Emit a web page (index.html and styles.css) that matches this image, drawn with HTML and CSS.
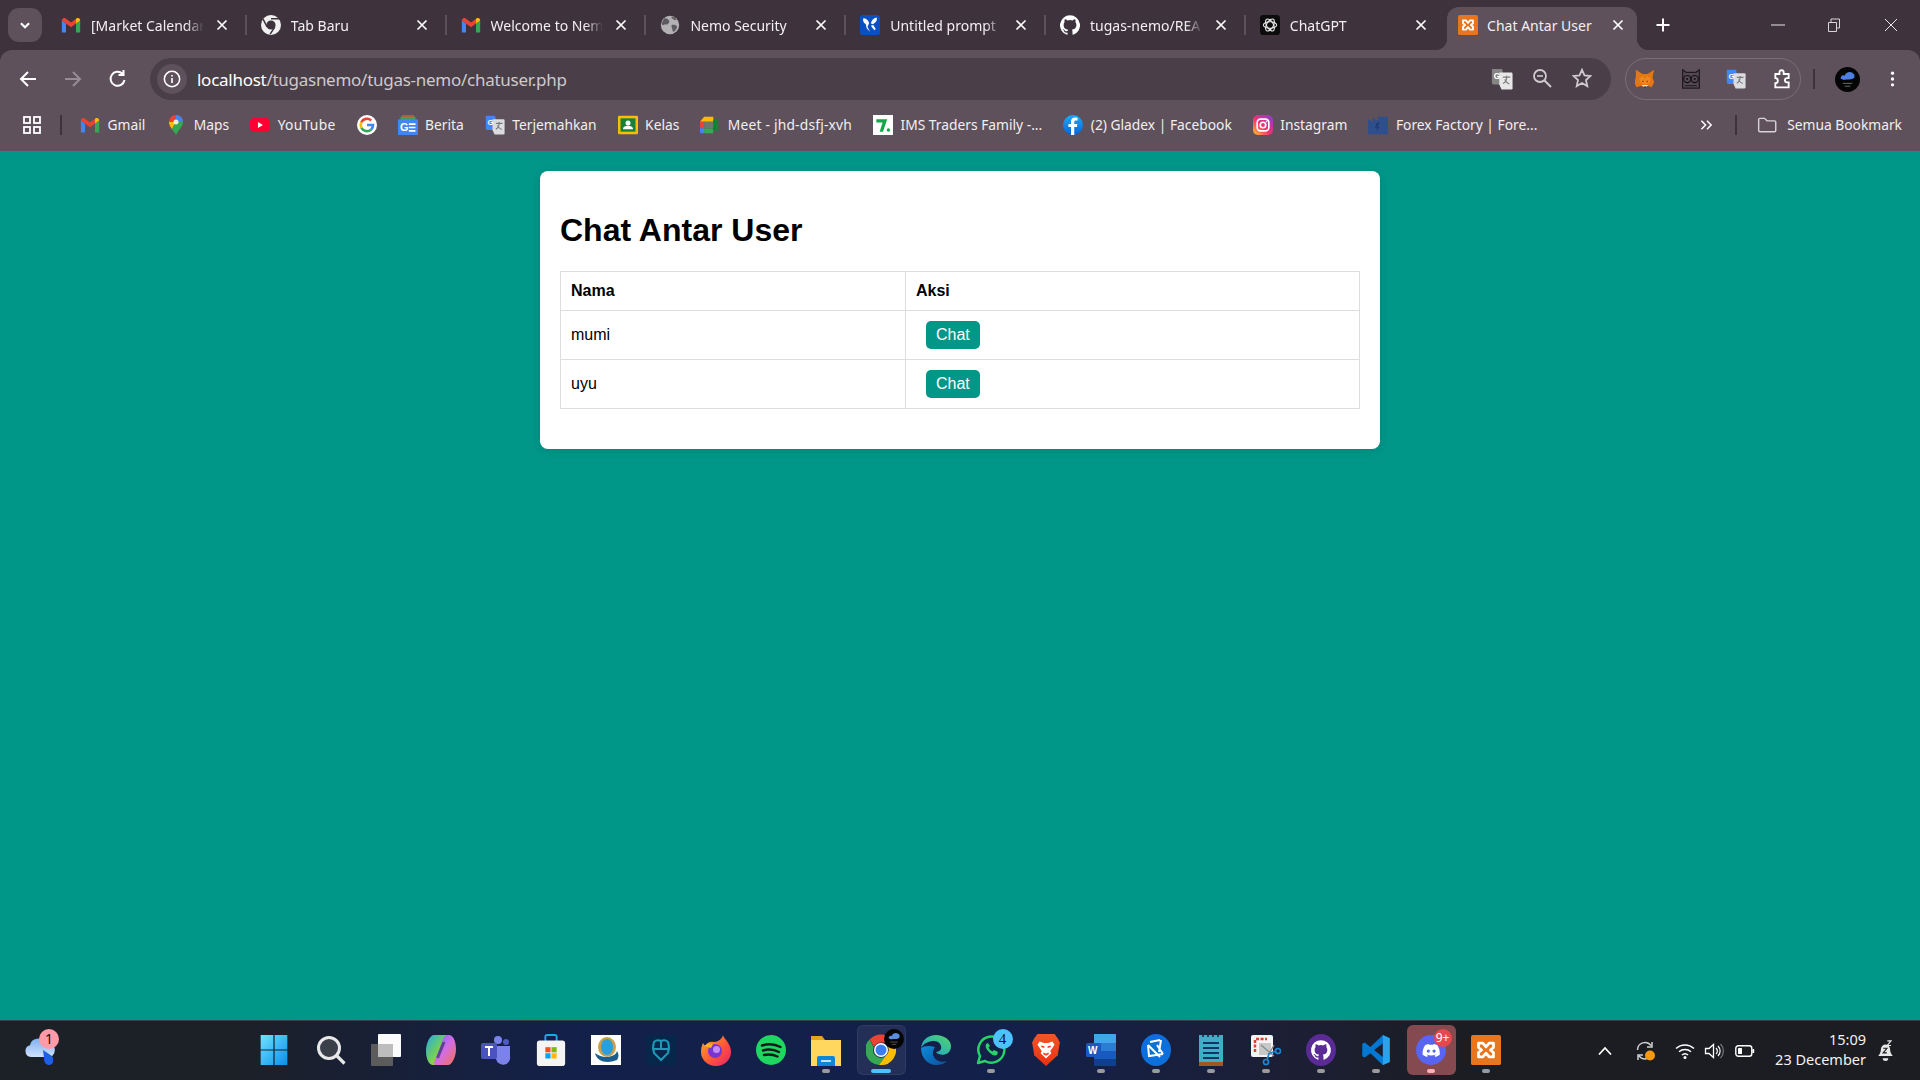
FILE: index.html
```html
<!DOCTYPE html>
<html lang="id">
<head>
<meta charset="utf-8">
<title>Chat Antar User</title>
<link rel="stylesheet" href="styles.css">
</head>
<body>
<svg class="sprite" aria-hidden="true">
  <symbol id="gmail" viewBox="0 0 24 24">
    <path fill="#4285f4" d="M1 21V6.500l5 3.700V21z"/>
    <path fill="#34a853" d="M18 21V10.200l5-3.700V21z"/>
    <path fill="#ea4335" d="M1 6.500C1 4 3.700 2.800 5.500 4.200L12 9l6.500-4.800c1.800-1.400 4.500-.2 4.500 2.300l-5 3.700-6 4.500-6-4.500z"/>
    <path fill="#fbbc04" d="M18 10.200V4.900l.5-.7c1.800-1.400 4.500-.2 4.500 2.300z"/>
  </symbol>
  <symbol id="translate" viewBox="0 0 24 24">
    <path fill="#4285f4" d="M1 1h11l1 4v13H3a2 2 0 0 1-2-2z"/>
    <path fill="#dadce0" d="M9 5h13a1.500 1.500 0 0 1 1.500 1.500V22a1.500 1.500 0 0 1-1.500 1.500H11.500L9 18z"/>
    <text x="3" y="12.500" class="svg-g">G</text>
    <path fill="none" stroke="#777" stroke-width="1.300" d="M13 10h8M17 8.500V10c0 4-2 6-4 7M15 12.500c1 2 3 4 5 5"/>
  </symbol>
  <symbol id="x" viewBox="0 0 12 12">
    <path d="M1.500 1.500l9 9M10.500 1.500l-9 9" stroke="#fff" stroke-width="1.700" fill="none"/>
  </symbol>
</svg>

<header class="chrome">
  <div class="tabstrip">
    <button class="tab-search"><svg viewBox="0 0 12 12"><path d="M2.500 4.500 6 8l3.500-3.500" fill="none" stroke="#fff" stroke-width="1.800"/></svg></button>
    <div class="tab"><svg class="fav"><use href="#gmail"/></svg><span class="title">[Market Calendar</span><svg class="close"><use href="#x"/></svg></div><i class="tsep"></i>
    <div class="tab"><svg class="fav" viewBox="0 0 24 24"><circle cx="12" cy="12" r="12" fill="#f1f1f1"/><circle cx="12" cy="12" r="5.500" fill="#3e333c"/><path d="M12 4.500h10M7.500 14.500 2.500 5M16.500 14.500 11 23" stroke="#3e333c" stroke-width="1.800"/></svg><span class="title">Tab Baru</span><svg class="close"><use href="#x"/></svg></div><i class="tsep"></i>
    <div class="tab"><svg class="fav"><use href="#gmail"/></svg><span class="title">Welcome to Nem</span><svg class="close"><use href="#x"/></svg></div><i class="tsep"></i>
    <div class="tab"><svg class="fav" viewBox="0 0 24 24"><circle cx="12" cy="12" r="11" fill="#b4b1b5"/><path fill="#5d5a60" d="M5 4c3 0 5 1 6 3s-1 3-2 4-4 0-5 1-2-1-2-2zM14 12c2-1 5 0 6 1s0 4-2 6-3 1-3-1-2-5-1-6zM14 2c2 0 5 1 6 4-2 0-3 0-4-1s-3-1-2-3z"/></svg><span class="title">Nemo Security</span><svg class="close"><use href="#x"/></svg></div><i class="tsep"></i>
    <div class="tab"><svg class="fav" viewBox="0 0 24 24"><rect width="24" height="24" rx="3" fill="#0b4fc4"/><path fill="#fff" d="M4 4c3 0 6 2 7 6l-2 4 3 6-4-4-1-5C5 10 3 8 4 4zM20 3c1 3-1 7-5 8l-2-1c1-4 3-6 7-7zM13 13l3-1 3 5-2 1z"/></svg><span class="title">Untitled prompt</span><svg class="close"><use href="#x"/></svg></div><i class="tsep"></i>
    <div class="tab"><svg class="fav" viewBox="0 0 24 24"><path fill="#fff" d="M12 .3a12 12 0 0 0-3.800 23.380c.6.110.820-.260.820-.580v-2.030c-3.340.730-4.040-1.610-4.040-1.610-.550-1.390-1.340-1.760-1.340-1.760-1.090-.740.080-.730.080-.730 1.200.090 1.840 1.240 1.840 1.240 1.070 1.830 2.800 1.300 3.490 1 .1-.780.420-1.310.760-1.610-2.670-.3-5.470-1.330-5.470-5.930 0-1.310.470-2.380 1.240-3.220-.130-.3-.540-1.520.120-3.180 0 0 1.010-.320 3.300 1.230a11.500 11.500 0 0 1 6 0c2.290-1.550 3.300-1.230 3.300-1.230.660 1.660.250 2.880.120 3.180.770.840 1.240 1.910 1.240 3.220 0 4.610-2.810 5.630-5.480 5.920.430.370.810 1.100.810 2.220v3.290c0 .320.220.7.820.580A12 12 0 0 0 12 .3z"/></svg><span class="title">tugas-nemo/REA</span><svg class="close"><use href="#x"/></svg></div><i class="tsep"></i>
    <div class="tab"><svg class="fav" viewBox="0 0 24 24"><rect width="24" height="24" rx="4" fill="#0c0c0c"/><g fill="none" stroke="#e8e8e8" stroke-width="1.300"><ellipse cx="12" cy="12" rx="8" ry="4"/><ellipse cx="12" cy="12" rx="8" ry="4" transform="rotate(60 12 12)"/><ellipse cx="12" cy="12" rx="8" ry="4" transform="rotate(120 12 12)"/></g></svg><span class="title">ChatGPT</span><svg class="close"><use href="#x"/></svg></div>
    <div class="tab active"><svg class="fav" viewBox="0 0 24 24"><rect width="24" height="24" rx="2" fill="#e8761f"/><path d="M6 6.500h3.500l2.500 3 2.500-3H18v3.500l-2.500 2 2.500 2v3.500h-3.500l-2.500-3-2.500 3H6V14l2.500-2L6 10z" fill="none" stroke="#fff" stroke-width="2.200" stroke-linejoin="round"/></svg><span class="title">Chat Antar User</span><svg class="close"><use href="#x"/></svg></div>
    <svg class="plus" viewBox="0 0 24 24"><path d="M12 5.500v13M5.500 12h13" stroke="#fff" stroke-width="2"/></svg>
    <div class="winctl">
      <span class="wbtn"><svg viewBox="0 0 14 14"><path d="M0 7h14" stroke="#e8e8e8"/></svg></span>
      <span class="wbtn"><svg viewBox="0 0 14 14"><path d="M1.500 4.500h8v9h-8zM4 4.500V1h8.500v9H9.500" fill="none" stroke="#d8d8d8"/></svg></span>
      <span class="wbtn last"><svg viewBox="0 0 14 14"><path d="M1 1l12 12M13 1 1 13" stroke="#e8e8e8"/></svg></span>
    </div>
  </div>

  <div class="toolbar">
    <span class="navbtn"><svg viewBox="0 0 20 20"><path d="M18 10H3M10 3l-7 7 7 7" fill="none" stroke="#fff" stroke-width="2"/></svg></span>
    <span class="navbtn"><svg viewBox="0 0 20 20"><path d="M2 10h15M10 3l7 7-7 7" fill="none" stroke="#978c94" stroke-width="2"/></svg></span>
    <span class="navbtn"><svg viewBox="0 0 20 20"><path d="M16.500 11a7 7 0 1 1-2-6.200M15.500 1v5h-5" fill="none" stroke="#fff" stroke-width="2"/></svg></span>
    <div class="omnibox">
      <span class="info"><svg viewBox="0 0 20 20"><circle cx="10" cy="10" r="8.500" fill="none" stroke="#fff" stroke-width="1.700"/><path d="M10 9v5.500M10 5.500v1.800" stroke="#fff" stroke-width="1.800"/></svg></span>
      <span class="url"><b>localhost</b>/tugasnemo/tugas-nemo/chatuser.php</span>
      <div class="omni-actions">
        <span class="oact"><svg viewBox="0 0 24 24" class="gray"><use href="#translate"/></svg></span>
        <span class="oact"><svg viewBox="0 0 20 20"><circle cx="8" cy="8" r="6" fill="none" stroke="#cfc9cd" stroke-width="1.800"/><path d="M12.500 12.500 19 19" stroke="#cfc9cd" stroke-width="2"/><path d="M5 8h6" stroke="#cfc9cd" stroke-width="1.600"/></svg></span>
        <span class="oact"><svg viewBox="0 0 20 20"><path d="m10 1.800 2.500 5.600 6 .6-4.500 4.100 1.300 6-5.300-3.100-5.300 3.100 1.300-6L1.500 8l6-.6z" fill="none" stroke="#cfc9cd" stroke-width="1.800"/></svg></span>
      </div>
    </div>
    <div class="extpill">
      <svg class="ext" viewBox="0 0 24 24"><path fill="#e2761b" d="M1 1l8 5h6l8-5-2 9 2 6-3 6-5-2-1 1h-6l-1-1-5 2-3-6 2-6z"/><path fill="#f6851b" d="M5 11l5-3 2 5 2-5 5 3-2 6-3 1-2 1-2-1-3-1z"/><path fill="#fff" d="M8 19l2 2h4l2-2-2 .5h-4z"/><path fill="#233447" d="M8.500 14l2 .5-1.500 1.500zM15.500 14l-2 .5 1.500 1.500zM10.500 21h3L12 23z"/></svg>
      <svg class="ext" viewBox="0 0 24 24"><path d="M2 1l4 3h12l4-3v22H2z" fill="#544852" stroke="#1f1a1f" stroke-width="1.500"/><g fill="none" stroke="#141114" stroke-width="1.300"><circle cx="7.500" cy="12" r="4.300"/><circle cx="16.500" cy="12" r="4.300"/></g><circle cx="7.500" cy="12" r="1.200" fill="#141114"/><circle cx="16.500" cy="12" r="1.200" fill="#141114"/><path d="M5 20h14" stroke="#141114"/></svg>
      <svg class="ext" viewBox="0 0 24 24"><use href="#translate"/></svg>
      <svg class="ext" viewBox="0 0 24 24"><path d="M4 6h5V4a2.500 2.500 0 0 1 5 0v2h6v5h-2a2.500 2.500 0 0 0 0 5h2v6H4v-5a3 3 0 0 0 0-6z" fill="none" stroke="#fff" stroke-width="2.200"/></svg>
    </div>
    <i class="vsep"></i>
    <svg class="profile" viewBox="0 0 26 26"><circle cx="13" cy="13" r="13" fill="#050505"/><path fill="#4c7fe0" d="M6 12c0-3 2-4 4-3 1-3 5-5 8-3s3 5 1 6-3 1-6 1-4 1-5 0-2 0-2-1z"/><path d="M8 17h10M10 20h6" stroke="#777" stroke-width=".9"/></svg>
    <svg class="kebab" viewBox="0 0 6 20"><circle cx="3" cy="3" r="2" fill="#fff"/><circle cx="3" cy="10" r="2" fill="#fff"/><circle cx="3" cy="17" r="2" fill="#fff"/></svg>
  </div>

  <nav class="bookmarks">
    <svg class="apps" viewBox="0 0 18 18"><g fill="none" stroke="#fff" stroke-width="1.800"><rect x="1" y="1" width="6" height="6"/><rect x="11" y="1" width="6" height="6"/><rect x="1" y="11" width="6" height="6"/><rect x="11" y="11" width="6" height="6"/></g></svg>
    <i class="bsep"></i>
    <div class="bm-list">
      <a class="bm"><svg><use href="#gmail"/></svg>Gmail</a>
      <a class="bm"><svg viewBox="0 0 24 24"><path fill="#ea4335" d="M12 0a8.500 8.500 0 0 1 8.500 8.500H3.500A8.500 8.500 0 0 1 12 0z"/><path fill="#fbbc04" d="M3.500 8.500h8.500L7 17C5 14 3.500 11.500 3.500 8.500z"/><path fill="#34a853" d="M12 8.500h8.500c0 5-5 9-8.500 15.500-1.500-3-3.500-5-5-7z"/><path fill="#4285f4" d="M12 0a8.500 8.500 0 0 1 8.500 8.500H15l-3-3z"/><circle cx="12" cy="8.500" r="3" fill="#fff" opacity=".85"/></svg>Maps</a>
      <a class="bm yt"><svg viewBox="0 0 24 24"><rect y="3.500" width="24" height="17" rx="5" fill="#ff0033"/><path d="M9.500 8.500v7l6-3.500z" fill="#fff"/></svg>YouTube</a>
      <a class="bm"><svg viewBox="0 0 24 24"><circle cx="12" cy="12" r="12" fill="#fff"/><path fill="none" stroke="#4285f4" stroke-width="3.200" d="M12 12h7.200a7.500 7.500 0 0 1-2.400 5.600"/><path fill="none" stroke="#34a853" stroke-width="3.200" d="M16.800 17.600A7.500 7.500 0 0 1 5.300 15.400"/><path fill="none" stroke="#fbbc04" stroke-width="3.200" d="M5.300 15.400a7.500 7.500 0 0 1 0-6.800"/><path fill="none" stroke="#ea4335" stroke-width="3.200" d="M5.300 8.600A7.500 7.500 0 0 1 17 6.500"/></svg></a>
      <a class="bm"><svg viewBox="0 0 24 24"><path fill="#ea4335" d="M5 0h14v3H5z"/><path fill="#34a853" d="M3 2h18v4H3z"/><rect y="5" width="24" height="19" rx="1" fill="#4285f4"/><text x="2.500" y="19" class="svg-gs">G</text><path d="M13 11h8M13 15h8M13 19h8" stroke="#fff" stroke-width="2"/></svg>Berita</a>
      <a class="bm"><svg viewBox="0 0 24 24"><use href="#translate"/></svg>Terjemahkan</a>
      <a class="bm"><svg viewBox="0 0 24 24"><rect y="1" width="24" height="22" rx="1.500" fill="#fbbc04"/><rect x="3" y="4" width="18" height="16" fill="#188038"/><circle cx="12" cy="9.500" r="3" fill="#fff"/><path d="M6 17c0-3 3-4 6-4s6 1 6 4z" fill="#fff"/></svg>Kelas</a>
      <a class="bm meet"><svg viewBox="0 0 24 24"><path fill="#fbbc04" d="M5 2h11v6H0z"/><path fill="#ea4335" d="M0 8h5v8H0z"/><path fill="#4285f4" d="M0 16h5v6H2a2 2 0 0 1-2-2z"/><path fill="#34a853" d="M5 16h11v6H5z"/><path fill="#188038" d="M16 8l6-4v16l-6-4z"/><rect x="16" y="6" width="2" height="12" fill="#00832d"/><rect x="5" y="8" width="11" height="8" fill="#6b7a70"/></svg>Meet - jhd-dsfj-xvh</a>
      <a class="bm"><svg viewBox="0 0 24 24"><rect width="24" height="24" fill="#fff"/><path fill="#12a84a" d="M4 5h13l-5 15H8l3.500-11H4z"/><circle cx="18.500" cy="18" r="2" fill="#12a84a"/></svg>IMS Traders Family -...</a>
      <a class="bm"><svg viewBox="0 0 24 24"><defs><linearGradient id="fb" x1="0" y1="0" x2="0" y2="1"><stop offset="0" stop-color="#18acfe"/><stop offset="1" stop-color="#0163e0"/></linearGradient></defs><circle cx="12" cy="12" r="12" fill="url(#fb)"/><path fill="#fff" d="M13.500 24v-9.500h3.200l.5-3.800h-3.700V8.500c0-1 .4-1.800 1.900-1.800h2V3.300c-1-.1-2-.2-3-.2-3 0-4.800 1.800-4.800 5v2.600H6.500v3.800h3.100V24z"/></svg>(2) Gladex | Facebook</a>
      <a class="bm"><svg viewBox="0 0 24 24"><defs><linearGradient id="ig" x1="0" y1="1" x2="1" y2="0"><stop offset="0" stop-color="#fdc830"/><stop offset=".45" stop-color="#f4306d"/><stop offset="1" stop-color="#7b3fe4"/></linearGradient></defs><rect width="24" height="24" rx="6" fill="url(#ig)"/><rect x="5" y="5" width="14" height="14" rx="4" fill="none" stroke="#fff" stroke-width="2"/><circle cx="12" cy="12" r="3.300" fill="none" stroke="#fff" stroke-width="2"/><circle cx="16.300" cy="7.700" r="1" fill="#fff"/></svg>Instagram</a>
      <a class="bm"><svg viewBox="0 0 24 24"><path fill="#2f4f8c" d="M0 5l6 3V3l6 4V2h12v21H0z"/><path fill="#1f3a70" d="M11 9l3 0-3 5h3l-4 6 1-5H8z"/></svg>Forex Factory | Fore...</a>
    </div>
    <div class="bm-end">
      <svg class="more" viewBox="0 0 14 12"><path d="M1.500 1.500 6 6l-4.500 4.500M7.500 1.500 12 6l-4.500 4.500" fill="none" stroke="#fff" stroke-width="1.600"/></svg>
      <i class="bsep"></i>
      <a class="bm all"><svg viewBox="0 0 24 24"><path d="M2 5.500a1.500 1.500 0 0 1 1.500-1.500H9l3 3h9a1.500 1.500 0 0 1 1.500 1.500v10A1.500 1.500 0 0 1 21 20H3.500A1.500 1.500 0 0 1 2 18.500z" fill="none" stroke="#d8d3d6" stroke-width="1.700"/></svg>Semua Bookmark</a>
    </div>
  </nav>
</header>

<main class="page">
  <section class="card">
    <h2>Chat Antar User</h2>
    <table>
      <thead>
        <tr><th class="col-name">Nama</th><th>Aksi</th></tr>
      </thead>
      <tbody>
        <tr><td>mumi</td><td><a class="chat-btn">Chat</a></td></tr>
        <tr><td>uyu</td><td><a class="chat-btn">Chat</a></td></tr>
      </tbody>
    </table>
  </section>
</main>

<footer class="taskbar">
  <div class="tb-left">
    <span class="weather">
      <svg viewBox="0 0 32 32"><defs><linearGradient id="cl" x1="0" y1="0" x2="0" y2="1"><stop offset="0" stop-color="#7fb0f0"/><stop offset="1" stop-color="#cfe2fb"/></linearGradient></defs><path fill="url(#cl)" d="M6 23a6 6 0 0 1-1-11.800A8 8 0 0 1 20 9a7 7 0 0 1 5 14z"/><path fill="#1f5fe8" d="M18 16l9 6c2 3 2 9-3 9-4 0-5-4-5-7z"/></svg>
      <b class="wbadge">1</b>
    </span>
  </div>
  <div class="tb-apps">
    <span class="ti win"><svg viewBox="0 0 30 36"><defs><linearGradient id="w" x1="0" y1="0" x2="1" y2="1"><stop offset="0" stop-color="#6fe3ff"/><stop offset="1" stop-color="#0a8fe8"/></linearGradient></defs><path fill="url(#w)" d="M0 1h14.300v16.300H0zM15.700 1H30v16.300H15.700zM0 18.700h14.300V35H0zM15.700 18.700H30V35H15.700z"/></svg></span>
    <span class="ti"><svg viewBox="0 0 30 30"><circle cx="13" cy="13" r="10.500" fill="#3a3f4a" stroke="#e8e8e8" stroke-width="3"/><path d="m20.500 20.500 8 8" stroke="#e8e8e8" stroke-width="3.200"/></svg></span>
    <span class="ti"><svg viewBox="0 0 30 32"><rect y="10" width="22" height="22" rx="1" fill="#5c5c5c"/><rect x="7" width="23" height="23" rx="1" fill="#fbfbfb"/><rect x="7" y="10" width="15" height="13" fill="#bdbdbd"/></svg></span>
    <span class="ti"><svg viewBox="0 0 30 32"><defs><linearGradient id="c1" x1="0" y1="0" x2="1" y2="1"><stop offset="0" stop-color="#22a8f0"/><stop offset=".5" stop-color="#6fd05a"/><stop offset="1" stop-color="#f4c72c"/></linearGradient><linearGradient id="c2" x1="0" y1="0" x2="1" y2="1"><stop offset="0" stop-color="#6a6cf2"/><stop offset=".5" stop-color="#d46ce4"/><stop offset="1" stop-color="#f4704c"/></linearGradient></defs><path fill="url(#c1)" d="M8 1h11c2 0 3 1 3 2L13 27c-1 3-3 4-5 4H7C3 31 0 25 0 17 0 9 4 1 8 1z"/><path fill="url(#c2)" d="M22 31H11c-2 0-3-1-3-2l9-24c1-3 3-4 5-4h1c4 0 7 6 7 14 0 8-4 16-8 16z"/><path d="M11.500 24 18 8" stroke="#14204a" stroke-width="3" opacity=".55"/></svg></span>
    <span class="ti"><svg viewBox="0 0 30 30"><circle cx="17" cy="5" r="4" fill="#7b83eb"/><circle cx="25" cy="7" r="3" fill="#5059c9"/><path d="M12 11h17v10a7 7 0 0 1-14 3z" fill="#7b83eb"/><rect y="8" width="16" height="16" rx="2" fill="#4b53bc"/><path d="M4 12h8M8 12v9" stroke="#fff" stroke-width="2"/></svg></span>
    <span class="ti"><svg viewBox="0 0 30 34"><path d="M9 8V3a2 2 0 0 1 2-2h8a2 2 0 0 1 2 2v5" fill="none" stroke="#1ea7e8" stroke-width="2"/><rect y="7" width="30" height="27" rx="3" fill="#f4f4f4"/><path fill="#f25022" d="M9 14h5.500v5.500H9z"/><path fill="#7fba00" d="M15.500 14H21v5.500h-5.500z"/><path fill="#00a4ef" d="M9 20.500h5.500V26H9z"/><path fill="#ffb900" d="M15.500 20.500H21V26h-5.500z"/></svg></span>
    <span class="ti"><svg viewBox="0 0 30 30"><rect width="30" height="30" fill="#fff"/><ellipse cx="16" cy="12" rx="9" ry="10" fill="#c9a04a"/><ellipse cx="16" cy="12" rx="6" ry="8" fill="#2a9fe0"/><path d="M4 18c2 9 12 11 22 7 2-3 2-6 0-9-1 6-14 9-22 2z" fill="#1b5e8c"/></svg></span>
    <span class="ti"><svg viewBox="0 0 30 30"><rect width="30" height="30" fill="#06264a"/><path d="M8 7c2-2 5-2 7-1 2-1 5-1 7 1 1 3 1 8 0 11l-7 7-7-7c-1-3-1-8 0-11zM15 6v9M7.500 14h15" fill="none" stroke="#1e9ab8" stroke-width="2"/></svg></span>
    <span class="ti"><svg viewBox="0 0 30 32"><defs><linearGradient id="ff" x1="0" y1="0" x2="1" y2="1"><stop offset="0" stop-color="#ffb020"/><stop offset=".6" stop-color="#ff4f3a"/><stop offset="1" stop-color="#e0226f"/></linearGradient></defs><path fill="url(#ff)" d="M22 1c0 3 8 8 8 17a15 14 0 0 1-30 0C0 14 1 11 2 9l2 3c2-4 6-5 9-4 4 0 8-3 9-7z"/><circle cx="14" cy="17" r="7" fill="#7a35d0"/><circle cx="15.500" cy="15.500" r="3.500" fill="#c68cf5"/><path d="M3 12c3-3 6-3 9-2l-2 4z" fill="#ffb020"/></svg></span>
    <span class="ti"><svg viewBox="0 0 30 30"><circle cx="15" cy="15" r="15" fill="#1ed760"/><path d="M6 10.500c6-2 13-1.500 18.500 1.500M7 15.500c5-1.500 11-1 16 1.500M8 20c4.500-1 9-.7 13.500 1.500" fill="none" stroke="#12191a" stroke-width="2.400" stroke-linecap="round"/></svg></span>
    <span class="ti"><svg viewBox="0 0 30 32"><path fill="#e3a71f" d="M0 2h11l3 4H0z"/><path fill="#ffd75e" d="M0 6h30v26H0z"/><path fill="#0d85d8" d="M6 24a2 2 0 0 1 2-2h14a2 2 0 0 1 2 2v8H6z"/><path d="M10 27h10" stroke="#fff" stroke-width="1.500"/></svg></span>
    <span class="ti active"><svg viewBox="0 0 30 30"><path fill="#ea4335" d="M3.500 4.500A15 15 0 0 1 28 7.500H15a7.500 7.500 0 0 0-7 4.500z"/><path fill="#34a853" d="M3.500 4.500A15 15 0 0 0 13 29.900L19.500 21a7.500 7.500 0 0 1-11.800-8.500z"/><path fill="#fbbc04" d="M28 7.500A15 15 0 0 1 13 29.900L19.500 21A7.500 7.500 0 0 0 21 10z"/><circle cx="15" cy="15" r="7" fill="#fff"/><circle cx="15" cy="15" r="5.500" fill="#3b7cf0"/></svg><svg class="chrome-prof" viewBox="0 0 26 26"><circle cx="13" cy="13" r="13" fill="#050505"/><path fill="#5a8ce0" d="M6 12c0-3 2-4 4-3 1-3 5-5 8-3s3 5 1 6-3 1-6 1-4 1-5 0-2 0-2-1z"/><path d="M8 17h10M10 20h6" stroke="#777" stroke-width=".9"/></svg></span>
    <span class="ti"><svg viewBox="0 0 30 30"><defs><linearGradient id="e1" x1="0" y1="1" x2="1" y2="0"><stop offset="0" stop-color="#1a9ad8"/><stop offset="1" stop-color="#52d86a"/></linearGradient><linearGradient id="e2" x1="0" y1="0" x2="1" y2="1"><stop offset="0" stop-color="#0f8cdc"/><stop offset="1" stop-color="#0a4f9c"/></linearGradient></defs><path fill="url(#e1)" d="M15 0C7 0 1 5 0 13c3-5 8-7 13-7 5 0 8 4 7 8-1 2-3 3-5 3 2 3 8 4 12 1 2-2 3-4 3-7C30 5 23 0 15 0z"/><path fill="url(#e2)" d="M0 13c0 10 7 17 15 17 4 0 8-1 11-4-5 2-11 0-13-4-2-3-1-7 1-10C8 10 3 11 0 13z"/></svg></span>
    <span class="ti"><svg viewBox="0 0 30 30"><path d="M2 28l2-7a13 13 0 1 1 5 5z" fill="#14204a" stroke="#25d366" stroke-width="2.500" stroke-linejoin="round"/><path d="M10 9c-1 3 0 5 3 8s5 4 8 3l1-3-4-2-1.500 1.500c-2-1-3-2-4-4L14 11l-2-3z" fill="#25d366"/></svg><b class="wa-badge">4</b></span>
    <span class="ti"><svg viewBox="0 0 26 30"><defs><linearGradient id="br" x1="0" y1="0" x2="0" y2="1"><stop offset="0" stop-color="#f1562b"/><stop offset="1" stop-color="#ee2f10"/></linearGradient></defs><path fill="url(#br)" d="M5 0h16l3 4 2 4-2 12-11 10L2 20 0 8l2-4z"/><path fill="#fff" d="M7 7l4 1.500h4L19 7l2 3-4 6 1 2-5 5-5-5 1-2-4-6z"/><path d="M8.500 11.500l3 1M17.500 11.500l-3 1M10.500 18l2.500 1.500 2.500-1.500" stroke="#f1431e" fill="none" stroke-width="1.500"/></svg></span>
    <span class="ti"><svg viewBox="0 0 30 32"><path fill="#41a5ee" d="M8 0h22v9H8z"/><path fill="#2b7cd3" d="M8 9h22v8H8z"/><path fill="#185abd" d="M8 17h22v8H8z"/><path fill="#103f91" d="M8 25h22v7H8z"/><rect y="9" width="15" height="14" rx="1.500" fill="#185abd"/><text x="2" y="20" class="svg-w">W</text></svg></span>
    <span class="ti"><svg viewBox="0 0 30 32"><ellipse cx="15" cy="16" rx="15" ry="16" fill="#0d6fdc"/><path d="M9 8l10-2M20 6l-2 12M7 11l12 12M7 11l1 11 14-2M16 11l6 9" fill="none" stroke="#fff" stroke-width="2"/></svg></span>
    <span class="ti"><svg viewBox="0 0 24 32"><rect width="24" height="29" y="1" fill="#3db0c8"/><rect y="28" width="24" height="4" fill="#a0581f"/><path d="M4 1v2M9 1v2M14 1v2M19 1v2" stroke="#123" stroke-width="1.500"/><path d="M4 9h16M4 14h16M4 19h16M4 24h16" stroke="#136" stroke-width="2"/></svg></span>
    <span class="ti"><svg viewBox="0 0 30 30"><rect width="22" height="22" rx="2" fill="#f4f4f4"/><path d="M4 17V5a1 1 0 0 1 1-1h11" fill="none" stroke="#d8442b" stroke-width="2.500" stroke-dasharray="3 1.500"/><rect x="8" y="8" width="12" height="12" fill="#c8c8c8"/><path d="M10 10 23 21M23 10 16 23" stroke="#8a8a8a" stroke-width="1.300"/><circle cx="27" cy="16" r="2.500" fill="none" stroke="#1a88d8" stroke-width="1.700"/><circle cx="15" cy="27" r="2.500" fill="none" stroke="#1a88d8" stroke-width="1.700"/><path d="M17 19l8-3M16 25l2-6" stroke="#1a88d8" stroke-width="1.500"/></svg></span>
    <span class="ti"><svg viewBox="0 0 30 32"><ellipse cx="15" cy="16" rx="15" ry="16" fill="#5a2a96"/><path fill="#fff" transform="translate(5 6) scale(.83)" d="M12 .3a12 12 0 0 0-3.800 23.380c.6.110.820-.260.820-.580v-2.030c-3.340.730-4.040-1.610-4.040-1.610-.550-1.390-1.340-1.760-1.340-1.760-1.090-.740.080-.730.080-.730 1.200.090 1.840 1.240 1.840 1.240 1.070 1.830 2.800 1.300 3.490 1 .1-.780.420-1.310.760-1.610-2.670-.3-5.470-1.330-5.470-5.930 0-1.310.470-2.380 1.240-3.220-.130-.3-.540-1.520.120-3.180 0 0 1.010-.320 3.300 1.230a11.500 11.500 0 0 1 6 0c2.290-1.550 3.300-1.230 3.300-1.230.660 1.660.250 2.880.120 3.180.770.840 1.240 1.910 1.240 3.220 0 4.610-2.810 5.630-5.480 5.920.430.370.810 1.100.810 2.220v3.290c0 .320.220.7.820.580A12 12 0 0 0 12 .3z"/></svg></span>
    <span class="ti"><svg viewBox="0 0 24 24"><path fill="#0078d4" d="M23 2.500 17.500 0 7.500 9.500 3 6 1 7v10l2 1 4.500-3.500L17.500 24l5.500-2.500zM17.500 6.500v11L10.500 12z"/><path fill="#2aa3ee" d="M17.500 0 23 2.500v19L17.500 24V17.500L17.500 6.500z"/></svg></span>
    <span class="ti discord"><svg viewBox="0 0 32 32"><ellipse cx="16" cy="16" rx="16" ry="16" fill="#5865f2"/><path fill="#fff" transform="translate(7 9.500) scale(.145)" d="M107.700,8.070A105.150,105.150,0,0,0,81.470,0a72.060,72.060,0,0,0-3.360,6.830A97.680,97.680,0,0,0,49,6.830,72.370,72.370,0,0,0,45.640,0,105.890,105.890,0,0,0,19.390,8.090C2.790,32.650-1.710,56.600.54,80.210h0A105.730,105.730,0,0,0,32.710,96.360,77.700,77.700,0,0,0,39.600,85.250a68.420,68.420,0,0,1-10.850-5.180c.91-.66,1.800-1.340,2.660-2a75.570,75.570,0,0,0,64.320,0c.87.710,1.760,1.390,2.660,2a68.680,68.680,0,0,1-10.870,5.190,77,77,0,0,0,6.890,11.100A105.250,105.250,0,0,0,126.600,80.220h0C129.240,52.840,122.090,29.110,107.700,8.070ZM42.450,65.690C36.180,65.690,31,60,31,53s5-12.740,11.430-12.740S54,46,53.890,53,48.840,65.690,42.450,65.690Zm42.240,0C78.410,65.690,73.250,60,73.250,53s5-12.740,11.440-12.740S96.230,46,96.120,53,91.080,65.690,84.690,65.690Z"/></svg><b class="dc-badge">9+</b></span>
    <span class="ti"><svg viewBox="0 0 24 24"><rect width="24" height="24" rx="1.500" fill="#e8761f"/><path d="M6 6.500h3.500l2.500 3 2.500-3H18v3.500l-2.500 2 2.500 2v3.500h-3.500l-2.500-3-2.500 3H6V14l2.500-2L6 10z" fill="none" stroke="#fff" stroke-width="2.200" stroke-linejoin="round"/></svg></span>
  </div>
  <div class="tray">
    <svg class="tr chev" viewBox="0 0 14 10"><path d="M1 8.500 7 2l6 6.500" fill="none" stroke="#fff" stroke-width="1.800"/></svg>
    <svg class="tr sync" viewBox="0 0 20 20"><path d="M2.500 9A7.500 7.500 0 0 1 16 4.500M17 1v5h-5M13 17A7.500 7.500 0 0 1 4 15M3 19v-5h5" fill="none" stroke="#cfcfcf" stroke-width="1.500"/><circle cx="15" cy="14.500" r="5" fill="#f59a0e"/></svg>
    <svg class="tr wifi" viewBox="0 0 20 16"><path d="M1 5.500a13 13 0 0 1 18 0M4 8.800a9 9 0 0 1 12 0M7 12a4.500 4.500 0 0 1 6 0" fill="none" stroke="#fff" stroke-width="1.500"/><circle cx="10" cy="14.500" r="1.500" fill="#fff"/></svg>
    <svg class="tr vol" viewBox="0 0 20 16"><path d="M1 5.500h3.500L9 1.500v13l-4.500-4H1z" fill="none" stroke="#fff" stroke-width="1.300"/><path d="M11.500 5a4 4 0 0 1 0 6M13.500 3a7 7 0 0 1 0 10" fill="none" stroke="#fff" stroke-width="1.200"/><path d="M16 1a10 10 0 0 1 0 14" fill="none" stroke="#777" stroke-width="1.200"/></svg>
    <svg class="tr batt" viewBox="0 0 20 12"><rect x=".8" y=".8" width="16" height="10.400" rx="2.500" fill="none" stroke="#fff" stroke-width="1.400"/><rect x="3" y="3" width="4" height="6" rx=".5" fill="#fff"/><path d="M18.300 4v4" stroke="#fff" stroke-width="1.800"/></svg>
    <div class="clock"><span>15:09</span><span>23 December</span></div>
    <svg class="tr bell" viewBox="0 0 18 24"><path d="M9 5a5 5 0 0 1 5 5c0 4 2 6 3 7.500H1C2 16 4 14 4 10a5 5 0 0 1 5-5z" fill="#e8e8e8"/><path d="M6 20a3 3 0 0 0 6 0z" fill="#e8e8e8"/><path d="M11 1h4l-4 5h4" fill="none" stroke="#e8e8e8" stroke-width="1.300"/><path d="M6.500 9h4l-4 5h4" fill="none" stroke="#1a1c22" stroke-width="1.300"/></svg>
  </div>
</footer>
</body>
</html>
```

FILE: styles.css
```css
* { box-sizing: border-box; }
html, body { margin: 0; height: 100%; }
body {
  width: 1920px;
  height: 1080px;
  overflow: hidden;
  display: flex;
  flex-direction: column;
  background: #009688;
  font-family: "Liberation Sans", Arial, sans-serif;
}
.sprite { display: none; }
svg { display: block; flex: none; }
.svg-g { font: bold 9px "Liberation Sans", sans-serif; fill: #fff; }
.svg-gs { font: bold 13px "Liberation Sans", sans-serif; fill: #fff; }
.svg-w { font: bold 10px "Liberation Sans", sans-serif; fill: #fff; }

/* browser chrome */
.chrome { flex: none; font-family: "Noto Sans", sans-serif; color: #f2eff1; background: #3e333c; }
.tabstrip {
  height: 50px;
  display: flex;
  align-items: center;
  padding-left: 8px;
}
.tab-search {
  width: 34px;
  height: 34px;
  border: 0;
  padding: 10px;
  border-radius: 11px;
  background: #5f515b;
  margin-right: 5px;
}
.tab {
  width: 197.800px;
  height: 43px;
  margin-top: 7px;
  padding: 0 0 7px 14px;
  display: flex;
  align-items: center;
  font-size: 14px;
  position: relative;
}
.fav { width: 20px; height: 20px; }
.title {
  flex: 1;
  min-width: 0;
  margin-left: 10px;
  white-space: nowrap;
  overflow: hidden;
  -webkit-mask-image: linear-gradient(90deg, #000 calc(100% - 18px), transparent);
  mask-image: linear-gradient(90deg, #000 calc(100% - 18px), transparent);
}
.close {
  width: 12px;
  height: 12px;
  margin: 0 17px 0 12px;
}
.tsep { width: 2px; height: 20px; background: #5f515b; flex: none; }
.tab.active {
  width: 190px;
  margin-left: 3px;
  padding-left: 11px;
  background: #5f515b;
  border-radius: 12px 12px 0 0;
}
.tab.active .title { margin-left: 9.500px; -webkit-mask-image: none; mask-image: none; }
.tab.active .close { margin: 0 13px 0 0; }
.tab.active::before,
.tab.active::after {
  content: "";
  position: absolute;
  bottom: 0;
  width: 12px;
  height: 12px;
}
.tab.active::before { left: -12px; background: radial-gradient(circle at 0 0, transparent 12px, #5f515b 12.500px); }
.tab.active::after { right: -12px; background: radial-gradient(circle at 100% 0, transparent 12px, #5f515b 12.500px); }
.plus { width: 24px; height: 24px; margin-left: 14px; }
.winctl { margin-left: auto; display: flex; height: 100%; align-items: center; }
.wbtn { width: 56px; display: flex; justify-content: center; }
.wbtn.last { width: 58px; }
.wbtn svg { width: 14px; height: 14px; }

.toolbar {
  height: 50px;
  display: flex;
  align-items: center;
  padding-left: 5px;
  background: #5f515b;
  border-radius: 12px 12px 0 0;
}
.navbtn { width: 45px; display: flex; justify-content: center; }
.navbtn svg { width: 20px; height: 20px; }
.omnibox {
  width: 1461px;
  height: 42px;
  margin: 8px 0 0 10px;
  background: #4a3f48;
  border-radius: 21px;
  display: flex;
  align-items: center;
  padding: 0 9px 0 7px;
}
.toolbar > .navbtn, .toolbar > .extpill, .toolbar > .vsep, .toolbar > .profile, .toolbar > .kebab { margin-top: 8px; }
.info {
  width: 30px;
  height: 30px;
  padding: 6px;
  border-radius: 50%;
  background: #5f515b;
}
.url {
  margin-left: 10px;
  font-size: 17px;
  letter-spacing: -.27px;
  color: #cfc8cc;
}
.url b { font-weight: 400; color: #fff; }
.omni-actions { margin-left: auto; display: flex; }
.oact { width: 40px; display: flex; justify-content: center; }
.oact svg { width: 20px; height: 20px; }
.oact svg.gray { width: 22px; height: 22px; filter: grayscale(1) brightness(1.05); }
.extpill {
  margin-left: 14px;
  width: 176px;
  height: 42px;
  border: 1px solid #7b6d77;
  border-radius: 21px;
  display: flex;
  align-items: center;
  gap: 25.500px;
  padding-left: 9px;
}
.ext { width: 20px; height: 20px; }
.vsep { width: 2px; height: 20px; background: #3e333c; margin-left: 12px; }
.profile { width: 25px; height: 25px; margin-left: 20px; }
.kebab { width: 5px; height: 20px; margin-left: 30px; }

.bookmarks {
  height: 51px;
  display: flex;
  align-items: center;
  padding: 0 0 2px 23px;
  background: #5f515b;
  font-size: 13.800px;
}
.apps { width: 18px; height: 18px; }
.bsep { width: 2px; height: 20px; background: #3e333c; flex: none; margin-left: 19px; }
.bm-list { display: flex; align-items: center; gap: 21px; margin-left: 18px; }
.bm { display: flex; align-items: center; gap: 7.500px; white-space: nowrap; }
.bm.yt { letter-spacing: .3px; }
.bm.meet { letter-spacing: .2px; }
.bm svg { width: 20px; height: 20px; }
.bm-end { margin-left: auto; display: flex; align-items: center; padding-right: 18px; }
.more { width: 13px; height: 12px; }
.bm-end .bsep { margin-left: 22px; }
.bm.all { margin-left: 20px; gap: 10px; }

/* page */
.page { flex: 1; min-height: 0; }
.card {
  width: 840px;
  margin: 20px auto 0;
  padding: 20px 20px 40px;
  background: #fff;
  border-radius: 8px;
  box-shadow: 0 2px 10px rgba(0, 0, 0, .1);
  color: #000;
}
.card h2 { margin: 21.440px 0; font-size: 32px; font-weight: 700; line-height: 37px; }
table { width: 100%; border-collapse: collapse; font-size: 16px; }
th, td { border: 1px solid #ddd; padding: 10px; text-align: left; line-height: 18px; }
.col-name { width: 345px; }
.chat-btn {
  display: inline-block;
  margin: 0 10px;
  padding: 5px 10px;
  background: #009688;
  color: #fff;
  border-radius: 5px;
  vertical-align: top;
}

/* taskbar */
.taskbar {
  flex: none;
  height: 60px;
  display: flex;
  align-items: center;
  border-top: 1px solid #3b3f45;
  background: linear-gradient(90deg, #1c2027 0, #1c2027 12%, #13204a 30%, #13204a 52%, #1c1f33 68%, #1b1d22 76%, #1b1d22 100%);
  font-family: "Noto Sans", sans-serif;
  color: #f2f2f2;
}
.tb-left { width: 246px; padding-left: 25px; flex: none; }
.weather { display: block; width: 34px; height: 34px; position: relative; }
.weather svg { width: 32px; height: 32px; }
.wbadge {
  position: absolute;
  left: 14px;
  top: -5px;
  width: 20px;
  height: 20px;
  border-radius: 50%;
  background: #ff9aa8;
  color: #111;
  font: 400 14px/20px "Noto Sans", sans-serif;
  text-align: center;
}
.tb-apps { display: flex; align-items: center; flex: none; }
.ti {
  width: 55px;
  height: 59px;
  padding-bottom: 1px;
  display: flex;
  align-items: center;
  justify-content: center;
  position: relative;
}
.ti > svg:first-child { width: 30px; height: 32px; position: relative; }
.ti::after {
  content: "";
  position: absolute;
  left: 50%;
  bottom: 7px;
  width: 8px;
  height: 4px;
  margin-left: -4px;
  border-radius: 2px;
  background: #9a9a9a;
  display: none;
}
.ti:nth-child(11)::after, .ti:nth-child(12)::after, .ti:nth-child(14)::after, .ti:nth-child(16)::after,
.ti:nth-child(17)::after, .ti:nth-child(18)::after, .ti:nth-child(19)::after, .ti:nth-child(20)::after,
.ti:nth-child(21)::after, .ti:nth-child(22)::after, .ti:nth-child(23)::after { display: block; }
.ti.win { margin-right: 2.500px; }
.ti.active::before, .ti.discord::before {
  content: "";
  position: absolute;
  left: 3px;
  right: 3px;
  top: 4px;
  bottom: 5px;
  border-radius: 6px;
  background: rgba(255, 255, 255, .07);
  border: 1px solid rgba(255, 255, 255, .06);
}
.ti.discord::before { background: #854a50; border: 0; }
.ti.active::after { width: 20px; margin-left: -10px; background: #4cc2ff; }
.ti.discord::after { background: #ffb0b8; }
.chrome-prof { position: absolute; width: 20px; height: 20px; left: 30px; top: 8px; }
.wa-badge, .dc-badge {
  position: absolute;
  border-radius: 50%;
  text-align: center;
}
.wa-badge {
  left: 29px; top: 8px; width: 20px; height: 20px;
  background: #4cc2ff;
  color: #111;
  font: 400 15px/20px "Liberation Serif", serif;
}
.dc-badge {
  left: 30px; top: 8px; width: 18px; height: 18px;
  background: #e5484d;
  color: #fff;
  font: 400 12px/18px "Noto Sans", sans-serif;
}
.tray { margin-left: auto; display: flex; align-items: center; padding-right: 26px; }
.chev { width: 14px; height: 10px; }
.sync { width: 20px; height: 20px; margin-left: 23px; }
.wifi { width: 20px; height: 16px; margin-left: 20px; }
.vol { width: 21px; height: 16px; margin-left: 9px; }
.batt { width: 20px; height: 12px; margin-left: 10px; }
.clock {
  margin: -4px 0 0 20px;
  display: flex;
  flex-direction: column;
  align-items: flex-end;
  font-size: 14.500px;
  line-height: 20px;
}
.bell { width: 17px; height: 22px; margin-left: 11px; }
```
